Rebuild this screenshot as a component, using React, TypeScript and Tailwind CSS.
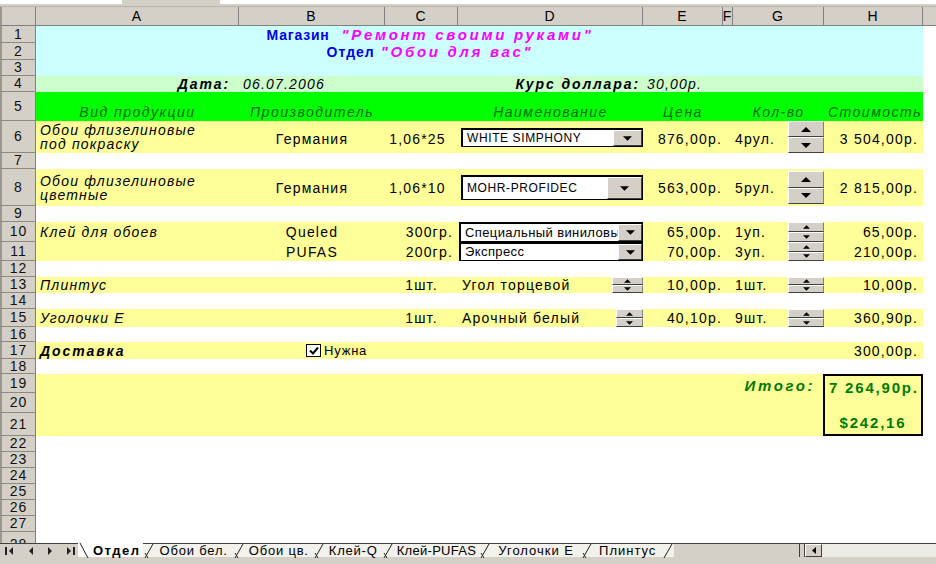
import React from "react";

const grid = "grid grid-cols-[203px_146px_73px_185px_80px_10px_91px_99px] w-[887px] shrink-0";
const body = "text-[14px] tracking-[1.2px] leading-none whitespace-nowrap";
const ital = "text-[14px] tracking-[1.2px] leading-none italic whitespace-nowrap";
const boldIt = "text-[14px] tracking-[1.9px] leading-none italic font-bold whitespace-nowrap";
const head = "text-[14px] tracking-[1.5px] leading-none italic text-[#006a00] whitespace-nowrap";

function Down({ w = 9, h = 5 }: { w?: number; h?: number }) {
  return (
    <svg width={w} height={h} viewBox="0 0 10 5">
      <path d="M0 0h10L5 5z" fill="#000" />
    </svg>
  );
}

function Up({ w = 9, h = 5 }: { w?: number; h?: number }) {
  return (
    <svg width={w} height={h} viewBox="0 0 10 5">
      <path d="M0 5h10L5 0z" fill="#000" />
    </svg>
  );
}

function RowHead({ n, cls = "" }: { n: number; cls?: string }) {
  return (
    <div
      className={`w-[36px] shrink-0 bg-[#d4d0c8] border-l-2 border-r border-b border-l-[#9a978f] border-r-[#808080] border-b-[#8c8980] flex items-center justify-center text-[14px] tracking-[1px] text-[#111] ${cls}`}
    >
      {n}
    </div>
  );
}

function Row({ n, h, bg = "", children }: { n: number; h: string; bg?: string; children?: React.ReactNode }) {
  return (
    <div className={`flex ${h}`}>
      <RowHead n={n} />
      <div className={`${grid} ${bg}`}>{children}</div>
      <div className="flex-1 bg-white" />
    </div>
  );
}

function Combo({ text, cls, btn, tcls }: { text: string; cls: string; btn: string; tcls: string }) {
  return (
    <div className={`flex bg-white border border-black border-l-2 border-t-2 ${cls}`}>
      <div className={`flex-1 min-w-0 overflow-hidden whitespace-nowrap flex items-center pl-[4px] ${tcls}`}>{text}</div>
      <div
        className={`${btn} shrink-0 bg-[#d4d0c8] border-t border-l border-white border-r border-b border-r-[#404040] border-b-[#404040] flex items-center justify-center`}
      >
        <Down />
      </div>
    </div>
  );
}

function Spin({ cls, s = 9 }: { cls: string; s?: number }) {
  const half =
    "flex-1 bg-[#d4d0c8] border-t border-l border-t-white border-l-white border-b border-r border-b-[#404040] border-r-[#808080] flex items-center justify-center";
  return (
    <div className={`flex flex-col shrink-0 ${cls}`}>
      <div className={half}>
        <Up w={s} h={Math.round(s / 2)} />
      </div>
      <div className={half}>
        <Down w={s} h={Math.round(s / 2)} />
      </div>
    </div>
  );
}

function Sep() {
  return (
    <svg width="12" height="14" viewBox="0 0 12 14" className="shrink-0">
      <path d="M2 14L10 0M2 9L5 14" stroke="#222" strokeWidth="1" fill="none" />
    </svg>
  );
}

export default function App() {
  const cols = [
    ["A", "w-[203px]"],
    ["B", "w-[146px]"],
    ["C", "w-[73px]"],
    ["D", "w-[185px]"],
    ["E", "w-[80px]"],
    ["F", "w-[10px]"],
    ["G", "w-[91px]"],
    ["H", "w-[99px]"],
  ];

  return (
    <div className="w-[936px] h-[564px] overflow-hidden bg-white font-['Liberation_Sans',Arial,'Noto_Sans',sans-serif] text-black">
      {/* formula bar remnant */}
      <div className="flex h-[7px] bg-[#d4d0c8] border-b border-[#b8b5ad]">
        <div className="w-[122px] h-[4px] bg-white" />
        <div className="w-[98px] h-[4px]" />
        <div className="flex-1 h-[4px] bg-white" />
      </div>

      {/* column headers */}
      <div className="flex h-[19px]">
        <div className="w-[36px] shrink-0 bg-[#d4d0c8] border-l-2 border-l-[#9a978f] border-r border-b border-[#808080]" />
        {cols.map(([l, w]) => (
          <div
            key={l}
            className={`${w} shrink-0 bg-[#d4d0c8] border-r border-b border-[#808080] flex items-center justify-center text-[14px] tracking-[1px] overflow-hidden`}
          >
            {l}
          </div>
        ))}
        <div className="flex-1 bg-[#d4d0c8] border-b border-[#808080]" />
      </div>

      <Row n={1} h="h-[17px]" bg="bg-[#ccffff]">
        <div className="col-span-7 flex items-center justify-center leading-none">
          <span className="text-[14px] tracking-[0.8px] font-bold text-[#0000ee]">Магазин</span>
          <span className="ml-[12px] text-[15px] tracking-[2.7px] font-bold italic text-[#ff00ff]">"Ремонт своими руками"</span>
        </div>
      </Row>
      <Row n={2} h="h-[17px]" bg="bg-[#ccffff]">
        <div className="col-span-7 flex items-center justify-center leading-none">
          <span className="text-[14px] tracking-[1px] font-bold text-[#0000ee]">Отдел</span>
          <span className="ml-[6px] text-[15px] tracking-[2.7px] font-bold italic text-[#ff00ff]">"Обои для вас"</span>
        </div>
      </Row>
      <Row n={3} h="h-[16px]" bg="bg-[#ccffff]" />
      <Row n={4} h="h-[16px]" bg="bg-[#ccffcc]">
        <div className={`${boldIt} flex items-center justify-end pr-[9px]`}>Дата:</div>
        <div className={`${ital} flex items-center pl-[4px]`}>06.07.2006</div>
        <div />
        <div className={`${boldIt} flex items-center justify-end pr-[3px]`}>Курс доллара:</div>
        <div className={`${ital} flex items-center pl-[4px] col-span-2`}>30,00р.</div>
      </Row>
      <Row n={5} h="h-[29px]" bg="bg-[#00ff00]">
        <div className={`${head} flex items-end justify-center pb-[2px]`}>Вид продукции</div>
        <div className={`${head} flex items-end justify-center pb-[2px]`}>Производитель</div>
        <div />
        <div className={`${head} flex items-end justify-center pb-[2px]`}>Наименование</div>
        <div className={`${head} flex items-end justify-center pb-[2px]`}>Цена</div>
        <div />
        <div className={`${head} flex items-end justify-center pb-[2px]`}>Кол-во</div>
        <div className={`${head} flex items-end justify-center pb-[2px] -mr-[3px]`}>Стоимость</div>
      </Row>

      <Row n={6} h="h-[32px]" bg="bg-[#ffff99]">
        <div className={`${ital} pl-[4px] pt-[2px] flex flex-col leading-[16px]`}>
          <span>Обои флизелиновые</span>
          <span>под покраску</span>
        </div>
        <div className={`${body} flex items-center justify-center pt-[4px]`}>Германия</div>
        <div className={`${body} flex items-center justify-center pt-[4px] -ml-[8px]`}>1,06*25</div>
        <div className="flex items-start pl-[3px] pt-[7px]">
          <Combo text="WHITE SIMPHONY" cls="w-[182px] h-[19px]" btn="w-[29px]" tcls="text-[12px] tracking-[0.6px]" />
        </div>
        <div className={`${body} flex items-center justify-end pr-[1px] pt-[4px]`}>876,00р.</div>
        <div />
        <div className="flex items-center">
          <span className={`${body} pl-[2px] pt-[4px]`}>4рул.</span>
          <Spin cls="ml-auto w-[36px] h-[32px]" s={10} />
        </div>
        <div className={`${body} flex items-center justify-end pr-[5px] pt-[4px]`}>3 504,00р.</div>
      </Row>
      <Row n={7} h="h-[16px]" />
      <Row n={8} h="h-[37px]" bg="bg-[#ffff99]">
        <div className={`${ital} pl-[4px] pt-[5px] flex flex-col leading-[16px]`}>
          <span>Обои флизелиновые</span>
          <span>цветные</span>
        </div>
        <div className={`${body} flex items-center justify-center`}>Германия</div>
        <div className={`${body} flex items-center justify-center -ml-[8px]`}>1,06*10</div>
        <div className="flex items-start pl-[3px] pt-[6px]">
          <Combo text="MOHR-PROFIDEC" cls="w-[182px] h-[25px]" btn="w-[35px]" tcls="text-[12px] tracking-[0.6px]" />
        </div>
        <div className={`${body} flex items-center justify-end pr-[1px]`}>563,00р.</div>
        <div />
        <div className="flex items-center">
          <span className={`${body} pl-[2px]`}>5рул.</span>
          <Spin cls="ml-auto w-[36px] h-[33px]" s={10} />
        </div>
        <div className={`${body} flex items-center justify-end pr-[5px]`}>2 815,00р.</div>
      </Row>
      <Row n={9} h="h-[16px]" />
      <Row n={10} h="h-[20px]" bg="bg-[#ffff99]">
        <div className={`${ital} pl-[4px] flex items-center`}>Клей для обоев</div>
        <div className={`${body} flex items-center justify-center`}>Queled</div>
        <div className={`${body} flex items-center justify-end pr-[5px]`}>300гр.</div>
        <div className="flex items-start pl-[1px]">
          <Combo text="Специальный виниловый" cls="w-[184px] h-[20px]" btn="w-[24px]" tcls="text-[13px] tracking-[0.4px]" />
        </div>
        <div className={`${body} flex items-center justify-end pr-[1px]`}>65,00р.</div>
        <div />
        <div className="flex items-center">
          <span className={`${body} pl-[2px]`}>1уп.</span>
          <Spin cls="ml-auto w-[36px] h-[20px]" s={7} />
        </div>
        <div className={`${body} flex items-center justify-end pr-[5px]`}>65,00р.</div>
      </Row>
      <Row n={11} h="h-[19px]" bg="bg-[#ffff99]">
        <div />
        <div className={`${body} flex items-center justify-center`}>PUFAS</div>
        <div className={`${body} flex items-center justify-end pr-[5px]`}>200гр.</div>
        <div className="flex items-start pl-[1px]">
          <Combo text="Экспресс" cls="w-[184px] h-[19px]" btn="w-[24px]" tcls="text-[13px] tracking-[0.4px]" />
        </div>
        <div className={`${body} flex items-center justify-end pr-[1px]`}>70,00р.</div>
        <div />
        <div className="flex items-center">
          <span className={`${body} pl-[2px]`}>3уп.</span>
          <Spin cls="ml-auto w-[36px] h-[19px]" s={7} />
        </div>
        <div className={`${body} flex items-center justify-end pr-[5px]`}>210,00р.</div>
      </Row>
      <Row n={12} h="h-[16px]" />
      <Row n={13} h="h-[16px]" bg="bg-[#ffff99]">
        <div className={`${ital} pl-[4px] flex items-center`}>Плинтус</div>
        <div />
        <div className={`${body} flex items-center justify-center`}>1шт.</div>
        <div className="flex items-center">
          <span className={`${body} pl-[4px]`}>Угол торцевой</span>
          <Spin cls="ml-auto w-[31px] h-[16px]" s={7} />
        </div>
        <div className={`${body} flex items-center justify-end pr-[1px]`}>10,00р.</div>
        <div />
        <div className="flex items-center">
          <span className={`${body} pl-[2px]`}>1шт.</span>
          <Spin cls="ml-auto w-[36px] h-[16px]" s={7} />
        </div>
        <div className={`${body} flex items-center justify-end pr-[5px]`}>10,00р.</div>
      </Row>
      <Row n={14} h="h-[16px]" />
      <Row n={15} h="h-[18px]" bg="bg-[#ffff99]">
        <div className={`${ital} pl-[4px] flex items-center`}>Уголочки Е</div>
        <div />
        <div className={`${body} flex items-center justify-center`}>1шт.</div>
        <div className="flex items-center">
          <span className={`${body} pl-[4px]`}>Арочный белый</span>
          <Spin cls="ml-auto w-[27px] h-[18px]" s={7} />
        </div>
        <div className={`${body} flex items-center justify-end pr-[1px]`}>40,10р.</div>
        <div />
        <div className="flex items-center">
          <span className={`${body} pl-[2px]`}>9шт.</span>
          <Spin cls="ml-auto w-[36px] h-[18px]" s={7} />
        </div>
        <div className={`${body} flex items-center justify-end pr-[5px]`}>360,90р.</div>
      </Row>
      <Row n={16} h="h-[15px]" />
      <Row n={17} h="h-[17px]" bg="bg-[#ffff99]">
        <div className={`${boldIt} pl-[4px] flex items-center`}>Доставка</div>
        <div className="flex items-center pl-[67px]">
          <div className="w-[15px] h-[13px] border border-black bg-white flex items-center justify-center shrink-0">
            <svg width="10" height="9" viewBox="0 0 10 9">
              <path d="M1 4.5L4 7.5L9 1.5" stroke="#000" strokeWidth="2" fill="none" />
            </svg>
          </div>
          <span className="ml-[3px] text-[13px] tracking-[0.8px] leading-none">Нужна</span>
        </div>
        <div className="col-span-5" />
        <div className={`${body} flex items-center justify-end pr-[5px]`}>300,00р.</div>
      </Row>
      <Row n={18} h="h-[15px]" />

      {/* totals block, rows 19-21 */}
      <div className="flex h-[62px]">
        <div className="flex flex-col">
          <RowHead n={19} cls="h-[19px]" />
          <RowHead n={20} cls="h-[20px]" />
          <RowHead n={21} cls="h-[23px]" />
        </div>
        <div className={`${grid} bg-[#ffff99]`}>
          <div className="col-span-7 flex justify-end items-start pt-[4px] pr-[9px] text-[15px] tracking-[2.6px] font-bold italic text-[#007a00] leading-none">
            Итого:
          </div>
          <div className="border-2 border-black -ml-[1px] flex flex-col justify-between py-[4px] text-[15px] tracking-[1.8px] font-bold text-[#007a00] leading-none">
            <span className="pl-[4px] whitespace-nowrap">7 264,90р.</span>
            <span className="self-center">$242,16</span>
          </div>
        </div>
        <div className="flex-1 bg-white" />
      </div>

      {[22, 23, 24, 25, 26, 27].map((n) => (
        <Row key={n} n={n} h="h-[16px]" />
      ))}
      <div className="flex h-[11px] overflow-hidden items-start">
        <RowHead n={28} cls="h-[16px] items-start pt-[2px]" />
      </div>

      {/* sheet tabs */}
      <div className="flex h-[14px] border-t border-[#404040] bg-[#f2f1ec] text-[13px] tracking-[0.8px] leading-none">
        <div className="flex items-center w-[78px] shrink-0 bg-[#d4d0c8]">
          <svg width="9" height="8" viewBox="0 0 9 8" className="ml-[5px]">
            <rect x="0" y="0" width="2" height="8" fill="#222" />
            <path d="M8 0v8L4 4z" fill="#222" />
          </svg>
          <svg width="5" height="8" viewBox="0 0 5 8" className="ml-[14px]">
            <path d="M5 0v8L1 4z" fill="#222" />
          </svg>
          <svg width="5" height="8" viewBox="0 0 5 8" className="ml-[15px]">
            <path d="M0 0v8L4 4z" fill="#222" />
          </svg>
          <svg width="9" height="8" viewBox="0 0 9 8" className="ml-[13px]">
            <path d="M1 0v8L5 4z" fill="#222" />
            <rect x="7" y="0" width="2" height="8" fill="#222" />
          </svg>
        </div>
        <div className="flex items-center bg-white -mt-[1px] pl-[1px]">
          <svg width="12" height="15" viewBox="0 0 12 15" className="shrink-0">
            <path d="M1 0L9 15" stroke="#222" strokeWidth="1" fill="none" />
          </svg>
          <span className="font-bold pl-[2px] pr-[2px] tracking-[1.5px]">Отдел</span>
        </div>
        <Sep />
        <span className="self-center px-[5px]">Обои бел.</span>
        <Sep />
        <span className="self-center px-[4px]">Обои цв.</span>
        <Sep />
        <span className="self-center px-[4px]">Клей-Q</span>
        <Sep />
        <span className="self-center px-[3px] tracking-[0.3px]">Клей-PUFAS</span>
        <Sep />
        <span className="self-center px-[7px] tracking-[1px]">Уголочки Е</span>
        <Sep />
        <span className="self-center px-[6px] tracking-[1px]">Плинтус</span>
        <svg width="12" height="14" viewBox="0 0 12 14" className="shrink-0">
          <path d="M2 14L10 0" stroke="#222" strokeWidth="1" fill="none" />
        </svg>
        <div className="flex-1 bg-[#d4d0c8]" />
        <div className="w-[6px] bg-[#d4d0c8] border-l border-r border-[#404040]" />
        <div className="w-[17px] bg-[#d4d0c8] border-t border-l border-white border-r border-b border-r-[#404040] border-b-[#404040] flex items-center justify-center">
          <svg width="4" height="7" viewBox="0 0 4 7">
            <path d="M4 0v7L0 3.5z" fill="#000" />
          </svg>
        </div>
        <div className="w-[114px] bg-[#ecebe6]" />
      </div>
      <div className="h-[7px] bg-[#d4d0c8]" />
    </div>
  );
}
